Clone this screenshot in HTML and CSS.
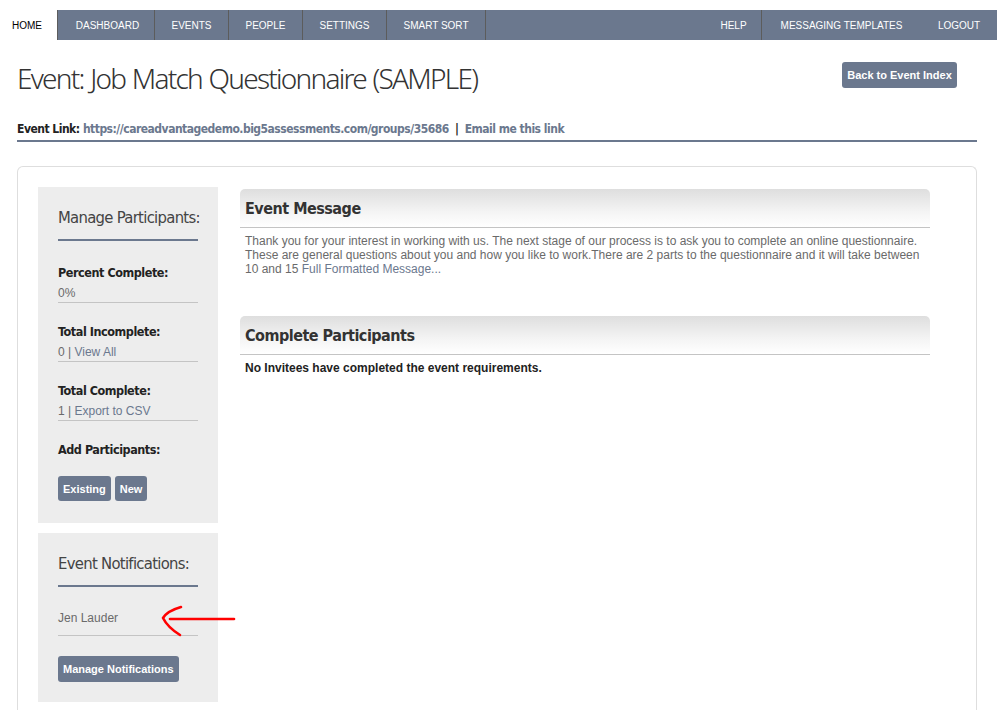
FILE: index.html
```html
<!DOCTYPE html>
<html>
<head>
<meta charset="utf-8">
<link rel="stylesheet" href="styles.css">
</head>
<body>
<nav class="topnav">
  <a class="tab home">HOME</a>
  <div class="bar">
    <div class="group">
      <a class="tab w97">DASHBOARD</a>
      <a class="tab w74">EVENTS</a>
      <a class="tab w74">PEOPLE</a>
      <a class="tab w84">SETTINGS</a>
      <a class="tab w99">SMART SORT</a>
    </div>
    <div class="group right">
      <a class="tab w55 sep">HELP</a>
      <a class="tab w159">MESSAGING TEMPLATES</a>
      <a class="tab w76 last">LOGOUT</a>
    </div>
  </div>
</nav>

<header class="page-head">
  <h1 class="title">Event: Job Match Questionnaire (SAMPLE)</h1>
  <a class="btn btn-back">Back to Event Index</a>
</header>

<div class="event-link">
  <strong>Event Link:</strong> <a>https://careadvantagedemo.big5assessments.com/groups/35686</a> <span class="pipe">|</span> <a>Email me this link</a>
</div>

<div class="content">
  <aside class="sidebar">
    <section class="panel">
      <h2 class="panel-title">Manage Participants:</h2>
      <div class="stat">
        <h3>Percent Complete:</h3>
        <p>0%</p>
      </div>
      <div class="stat">
        <h3>Total Incomplete:</h3>
        <p>0 | <a>View All</a></p>
      </div>
      <div class="stat">
        <h3>Total Complete:</h3>
        <p>1 | <a>Export to CSV</a></p>
      </div>
      <h3 class="add">Add Participants:</h3>
      <div class="btns">
        <a class="btn">Existing</a>
        <a class="btn">New</a>
      </div>
    </section>
    <section class="panel panel2">
      <h2 class="panel-title">Event Notifications:</h2>
      <div class="stat notif">
        <p>Jen Lauder</p>
      </div>
      <div class="btns">
        <a class="btn">Manage Notifications</a>
      </div>
    </section>
  </aside>

  <main class="main">
    <section class="block">
      <h2 class="block-head">Event Message</h2>
      <p class="msg">Thank you for your interest in working with us. The next stage of our process is to ask you to complete an online questionnaire. These are general questions about you and how you like to work.There are 2 parts to the questionnaire and it will take between 10 and 15 <a class="more">Full Formatted Message...</a></p>
    </section>
    <section class="block block2">
      <h2 class="block-head">Complete Participants</h2>
      <p class="none">No Invitees have completed the event requirements.</p>
    </section>
  </main>
</div>

<svg class="arrow" width="90" height="40" viewBox="0 0 90 40">
  <path d="M18 14 L82 14" stroke="#ff0000" stroke-width="2.6" fill="none" stroke-linecap="round"/>
  <path d="M29 2 C22 4 14 8 11 13 C14 19 20 25 28 30" stroke="#ff0000" stroke-width="2.6" fill="none" stroke-linecap="round" stroke-linejoin="round"/>
</svg>
</body>
</html>
```
FILE: styles.css
```css
* { box-sizing: border-box; }
html, body { margin: 0; padding: 0; background: #fff; }
body {
  font-family: "Liberation Sans", Arial, sans-serif;
  font-size: 12px;
  color: #333;
  width: 1007px;
  height: 710px;
  overflow: hidden;
  position: relative;
}
a { text-decoration: none; cursor: pointer; }

.topnav {
  display: flex;
  margin-top: 10px;
  height: 30px;
  width: 997px;
}
.tab {
  display: flex;
  align-items: center;
  justify-content: center;
  height: 30px;
  font-size: 10px;
  color: #fff;
  text-transform: uppercase;
  border-right: 1px solid #5c5c5c;
}
.tab.home {
  width: 57px;
  color: #000;
  border-right: none;
  justify-content: flex-start;
  padding-left: 12px;
}
.bar {
  flex: 1;
  display: flex;
  justify-content: space-between;
  background: #6b788e;
  border-left: 1px solid #5c5c5c;
}
.group { display: flex; }
.group.right .tab { border-right: none; }
.group.right .tab.sep { border-right: 1px solid #5c5c5c; }
.w97 { width: 97px; padding-left: 3px; }
.w74 { width: 74px; }
.w84 { width: 84px; }
.w99 { width: 99px; }
.w55 { width: 56px; }
.w159 { width: 159px; }
.w76 { width: 76px; }

.page-head {
  display: flex;
  justify-content: space-between;
  align-items: flex-start;
  padding: 0 50px 0 17px;
  height: 82px;
}
.title {
  margin: 19px 0 0 0;
  font-family: "Noto Sans", sans-serif;
  font-weight: 300;
  font-size: 28px;
  letter-spacing: -1.75px;
  word-spacing: 1px;
  line-height: 38px;
  color: #333;
}
.btn {
  display: inline-flex;
  align-items: center;
  background: #6b788e;
  color: #fff;
  font-weight: bold;
  font-size: 11px;
  border-radius: 3px;
  height: 26px;
  padding: 0 5px;
}
.btn-back {
  margin-top: 22px;
  width: 115px;
  justify-content: center;
  padding: 0;
}

.event-link {
  margin: 0 30px 0 17px;
  height: 20px;
  line-height: 14px;
  border-bottom: 2px solid #6b788e;
  font-family: "DejaVu Sans Condensed", sans-serif;
  font-size: 12px;
  letter-spacing: -0.5px;
  font-weight: bold;
  color: #222;
}
.event-link a { color: #6b788e; }
.event-link .pipe { color: #222; margin: 0 3px; }

.content {
  margin: 24px 30px 0 17px;
  border: 1px solid #dedede;
  border-bottom: none;
  border-radius: 6px 6px 0 0;
  padding: 20px 46px 0 20px;
  display: flex;
  gap: 22px;
  height: 560px;
}
.sidebar {
  width: 180px;
  flex: none;
  display: flex;
  flex-direction: column;
  align-items: stretch;
  gap: 10px;
}
.panel {
  background: #ededed;
  padding: 20px 20px 22px 20px;
}
.panel-title {
  margin: 0 0 22px 0;
  font-family: "DejaVu Sans Condensed", sans-serif;
  font-weight: normal;
  font-size: 16.5px;
  letter-spacing: -0.7px;
  white-space: nowrap;
  color: #444;
  line-height: 22px;
  padding-bottom: 10px;
  border-bottom: 2px solid #6b788e;
}
.stat {
  border-bottom: 1px solid #c4c4c4;
  margin-bottom: 19px;
}
.stat h3, .add {
  margin: 0;
  font-family: "DejaVu Sans Condensed", sans-serif;
  font-size: 12.5px;
  letter-spacing: -0.45px;
  font-weight: bold;
  color: #222;
  line-height: 20px;
}
.stat p {
  margin: 0;
  padding-top: 1px;
  font-size: 12px;
  color: #6a6a6a;
  line-height: 18px;
}
.stat a { color: #6b788e; }
.panel .add { margin: 1px 0 16px 0; }
.btns { display: flex; gap: 4px; }
.btns .btn { height: 25px; }
.panel.panel2 { padding-bottom: 20px; }
.panel2 .panel-title { margin-bottom: 18px; }
.notif { margin-bottom: 20px; }
.notif p { line-height: 26px; padding-top: 0; padding-bottom: 4px; }
.panel2 .btn { height: 26px; }

.main { flex: 1; padding-top: 2px; }
.block-head {
  margin: 0;
  height: 39px;
  padding: 10px 5px 0;
  background: linear-gradient(to bottom, #dedede 0%, #f4f4f4 60%, #fff 100%);
  border-radius: 5px 5px 0 0;
  border-bottom: 1px solid #c4c4c4;
  font-family: "DejaVu Sans Condensed", sans-serif;
  font-size: 16px;
  letter-spacing: -0.5px;
  font-weight: bold;
  line-height: 20px;
  color: #333;
}
.msg {
  margin: 6px 0 0 5px;
  font-size: 12px;
  line-height: 14px;
  color: #6a6a6a;
}
.msg a { color: #6b788e; }
.block2 { margin-top: 40px; }
.none {
  margin: 6px 0 0 5px;
  font-weight: bold;
  font-size: 12px;
  line-height: 14px;
  color: #222;
}

.arrow {
  position: absolute;
  left: 152px;
  top: 605px;
}
```
